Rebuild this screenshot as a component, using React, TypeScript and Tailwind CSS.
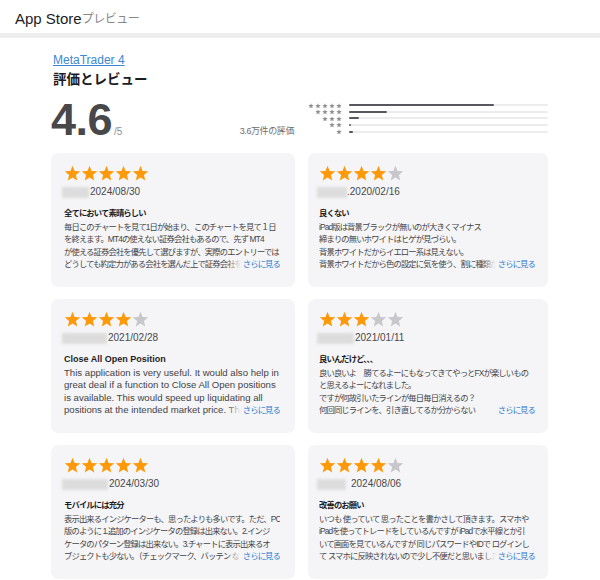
import React from "react";

const STAR_POINTS =
  "12,1 14.94,8.45 22.94,8.95 16.76,14.05 18.76,21.8 12,17.5 5.24,21.8 7.24,14.05 1.06,8.95 9.06,8.45";

function Star({ color, w, h }: { color: string; w: number; h: number }) {
  return (
    <svg width={w} height={h} viewBox="0 0 24 22.6" className="block shrink-0">
      <polygon points={STAR_POINTS} fill={color} />
    </svg>
  );
}

type Review = {
  stars: number;
  nameW: number;
  dateGap: number;
  date: string;
  title: string;
  lines: string[];
  last: string;
  jp: boolean;
  right: boolean;
  fade: boolean;
};

const reviews: Review[] = [
  {
    stars: 5,
    nameW: 27,
    dateGap: 1,
    date: "2024/08/30",
    title: "全てにおいて素晴らしい",
    lines: [
      "毎日このチャートを見て1日が始まり、このチャートを見て１日",
      "を終えます。MT4の使えない証券会社もあるので、先ず MT4",
      "が使える証券会社を優先して選びますが、実際のエントリーでは",
    ],
    last: "どうしても約定力がある会社を選んだ上で証券会社を選ぶようにしています",
    jp: true,
    right: false,
    fade: true,
  },
  {
    stars: 4,
    nameW: 30,
    dateGap: 0,
    date: ".2020/02/16",
    title: "良くない",
    lines: [
      "iPad版は背景ブラックが無いのが大きくマイナス",
      "締まりの無いホワイトはヒゲが見づらい。",
      "背景ホワイトだからイエロー系は見えない。",
    ],
    last: "背景ホワイトだから色の設定に気を使う、割に種類が少ない",
    jp: true,
    right: true,
    fade: true,
  },
  {
    stars: 4,
    nameW: 45,
    dateGap: 1,
    date: "2021/02/28",
    title: "Close All Open Position",
    lines: [
      "This application is very useful. It would also help in",
      "great deal if a function to Close All Open positions",
      "is available. This would speed up liquidating all",
    ],
    last: "positions at the intended market price. This would be great",
    jp: false,
    right: false,
    fade: true,
  },
  {
    stars: 3,
    nameW: 37,
    dateGap: 1,
    date: "2021/01/11",
    title: "良いんだけど、、、",
    lines: [
      "良い良いよ　勝てるよーにもなってきてやっとFXが楽しいもの",
      "と思えるよーになれました。",
      "ですが何故引いたラインが毎日毎日消えるの？",
    ],
    last: "何回同じラインを、引き直してるか分からない",
    jp: true,
    right: true,
    fade: false,
  },
  {
    stars: 5,
    nameW: 46,
    dateGap: 1,
    date: "2024/03/30",
    title: "モバイルには充分",
    lines: [
      "表示出来るインジケーターも、思ったよりも多いです。ただ、PC",
      "版のように 1.追加のインジケータの登録は出来ない。2.インジ",
      "ケータのパターン登録は出来ない。3.チャートに表示出来るオ",
    ],
    last: "ブジェクトも少ない。（チェックマーク、バッテン など）が欲しいです",
    jp: true,
    right: false,
    fade: true,
  },
  {
    stars: 4,
    nameW: 29,
    dateGap: 5,
    date: "2024/08/06",
    title: "改善のお願い",
    lines: [
      "いつも 使っていて 思ったことを書かさして頂きます。スマホや",
      "iPadを使ってトレードをしているんですが iPadで水平線とか引",
      "いて画面を見ているんですが 同じパスワードやIDで ログインし",
    ],
    last: "て スマホに反映されないので少し不便だと思いました。改善をお願いします",
    jp: true,
    right: true,
    fade: true,
  },
];

function ReviewCard({ r }: { r: Review }) {
  const bodyCls = r.jp
    ? "text-[8.3px] tracking-[-0.85px] leading-[12.6px]"
    : "text-[9.6px] leading-[12.5px]";
  const titleCls = r.jp
    ? "text-[8.3px] tracking-[-0.85px] leading-[12.6px] font-bold"
    : "text-[9px] leading-[12.6px] font-bold";
  return (
    <div
      className={`h-[134px] rounded-[7px] bg-[#f5f5f7] pt-[12px] ${
        r.right ? "pl-[11px] pr-[13px]" : "pl-[13px] pr-[15px]"
      }`}
    >
      <div className="flex h-[16px]">
        {[0, 1, 2, 3, 4].map((i) => (
          <Star key={i} color={i < r.stars ? "#fe9a0a" : "#c8c8cc"} w={17} h={16} />
        ))}
      </div>
      <div className="mt-[4px] flex h-[14px] items-center">
        <div
          className="-ml-[2px] h-[11px] shrink-0 bg-[#dcdcdc] blur-[1.5px]"
          style={{ width: r.nameW }}
        />
        <span
          className="text-[10px] leading-[14px] text-[#48484a]"
          style={{ marginLeft: r.dateGap }}
        >
          {r.date}
        </span>
      </div>
      <div className={`mt-[8px] text-[#1d1d1f] ${titleCls}`}>{r.title}</div>
      <div className={`mt-[1px] text-[#444446] ${bodyCls}`}>
        {r.lines.map((l, i) => (
          <div key={i} className="overflow-hidden whitespace-nowrap">
            {l}
          </div>
        ))}
        <div className="relative overflow-hidden whitespace-nowrap">
          {r.last}
          <span
            className={`absolute right-0 top-0 text-[8.3px] tracking-[-0.85px] text-[#2f7bd0] ${
              r.fade
                ? "bg-[linear-gradient(to_right,rgba(245,245,247,0),#f5f5f7_14px)] pl-[16px]"
                : "bg-[#f5f5f7] pl-[4px]"
            }`}
          >
            さらに見る
          </span>
        </div>
      </div>
    </div>
  );
}

const hist = [73, 19, 5, 0.8, 2.2];

export default function App() {
  return (
    <div className="min-h-[580px] w-[600px] bg-white font-['Liberation_Sans','Noto_Sans_CJK_JP',sans-serif]">
      <header className="flex h-[38px] items-center border-b-[5px] border-[#eeeeef] px-[15px] pt-[5px]">
        <span className="text-[15px] font-medium leading-[20px] text-[#1d1d1f]">App Store</span>
        <span className="text-[12px] leading-[20px] tracking-[-0.5px] text-[#86868b]">プレビュー</span>
      </header>

      <main className="ml-[51px] w-[497px] pt-[14px]">
        <a className="ml-[2px] block text-[12px] leading-[16px] text-[#3a87d2] underline underline-offset-[1px]">
          MetaTrader 4
        </a>
        <h2 className="ml-[2px] mt-[3px] text-[13.5px] font-bold leading-[18px] text-[#1d1d1f]">
          評価とレビュー
        </h2>

        <div className="mt-[8px] flex h-[45px] items-end">
          <div className="flex items-baseline">
            <span className="text-[45px] font-bold leading-[45px] tracking-[-0.5px] text-[#48484a]">4.6</span>
            <span className="ml-[2px] text-[10px] text-[#8e8e93]">/5</span>
          </div>
          <div className="mb-[6px] flex-1 text-right text-[9px] leading-[9px] tracking-[-0.4px] text-[#6e6e73]">
            3.6万件の評価
          </div>
          <div className="mb-[8px] ml-[13px] w-[241px] self-start pt-[5px]">
            {hist.map((p, i) => (
              <div key={i} className="flex h-[6.6px] items-center">
                <div className="flex w-[35px] justify-end gap-[1px]">
                  {Array.from({ length: 5 - i }).map((_, j) => (
                    <Star key={j} color="#8e8e93" w={6} h={5.6} />
                  ))}
                </div>
                <div className="relative ml-[7px] h-[2px] flex-1 rounded-full bg-[#ececee]">
                  <div
                    className="absolute left-0 top-0 h-[2px] rounded-full bg-[#58585c]"
                    style={{ width: `${p}%` }}
                  />
                </div>
              </div>
            ))}
          </div>
        </div>

        <div className="mt-[11px] grid grid-cols-[244px_240px] gap-x-[13px] gap-y-[12px]">
          {reviews.map((r, i) => (
            <ReviewCard key={i} r={r} />
          ))}
        </div>
      </main>
    </div>
  );
}
